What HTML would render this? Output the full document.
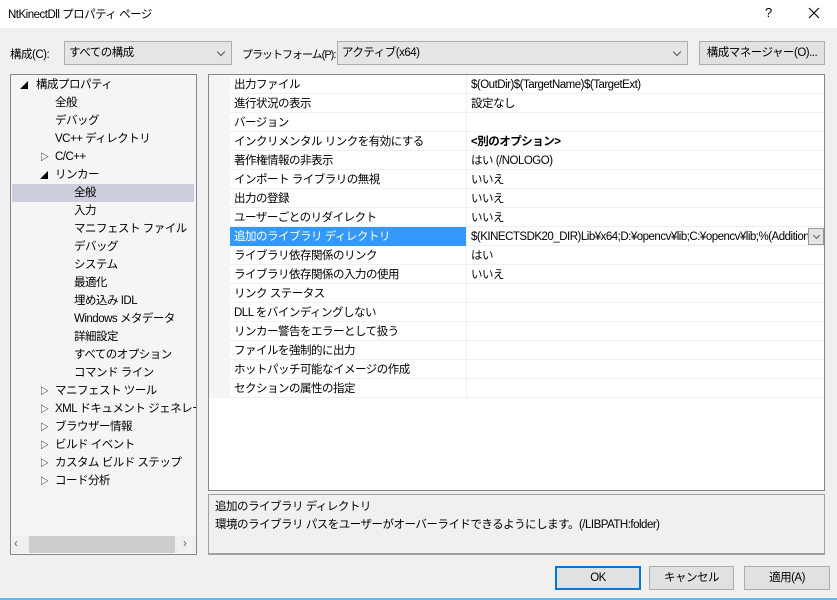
<!DOCTYPE html>
<html><head><meta charset="utf-8"><style>
*{margin:0;padding:0;box-sizing:border-box}
body{width:837px;height:600px;background:#f0f0f0;font-family:"Liberation Sans","Noto Sans CJK JP",sans-serif;font-size:11.5px;letter-spacing:-0.5px;color:#000;position:relative;overflow:hidden}
.a{position:absolute;white-space:nowrap}
.title{left:0;top:0;width:837px;height:28px;background:#fff}
.combo{background:#e5e5e5;border:1px solid #adadad;height:24px;line-height:22px;padding-left:4px}
.chev{position:absolute;right:7px;top:7px;width:6px;height:6px;border-right:1px solid #555;border-bottom:1px solid #555;transform:rotate(45deg)}
.btn{background:#e1e1e1;border:1px solid #adadad;height:24px;line-height:22px;text-align:center}
.tree{left:10px;top:74px;width:187px;height:481px;border:1px solid #828790;background:#f5f5f5}
.ti{position:absolute;height:18px;line-height:18px}
.grid{left:208px;top:74px;width:617px;height:417px;border:1px solid #828790;background:#fff}
.row{position:absolute;left:21px;width:594px;height:19px;line-height:18px;border-bottom:1px solid #f0f0f0}
.row .n{position:absolute;left:4px;top:1px}
.row .v{position:absolute;left:241px;top:1px}
.row .sep{position:absolute;left:236px;top:0;width:1px;height:19px;background:#f0f0f0}
</style></head><body>
<div class="a title"></div>
<div class="a" style="left:8px;top:6px">NtKinectDll プロパティ ページ</div>
<div class="a" style="left:765px;top:5px;font-size:13px">?</div>
<svg class="a" style="left:808px;top:7px" width="12" height="12"><path d="M1 1L11 11M11 1L1 11" stroke="#000" stroke-width="1.1"/></svg>

<div class="a" style="left:10px;top:46px">構成(C):</div>
<div class="a combo" style="left:64px;top:41px;width:168px">すべての構成<span class="chev"></span></div>
<div class="a" style="left:242px;top:46px;font-size:11px;letter-spacing:-1px">プラットフォーム(P):</div>
<div class="a combo" style="left:337px;top:41px;width:351px">アクティブ(x64)<span class="chev"></span></div>
<div class="a btn" style="left:699px;top:41px;width:126px">構成マネージャー(O)...</div>

<div class="a tree">
<div class="ti" style="left:1px;top:109px;width:182px;background:#cccedb"></div>
<div class="ti" style="left:9px;top:2px;font-size:8px">◢</div><div class="ti" style="left:25px;top:1px">構成プロパティ</div>
<div class="ti" style="left:44px;top:19px">全般</div>
<div class="ti" style="left:44px;top:37px">デバッグ</div>
<div class="ti" style="left:44px;top:55px">VC++ ディレクトリ</div>
<div class="ti" style="left:29px;top:73px;font-size:9px">▷</div><div class="ti" style="left:44px;top:73px">C/C++</div>
<div class="ti" style="left:29px;top:92px;font-size:8px">◢</div><div class="ti" style="left:44px;top:91px">リンカー</div>
<div class="ti" style="left:63px;top:109px">全般</div>
<div class="ti" style="left:63px;top:127px">入力</div>
<div class="ti" style="left:63px;top:145px">マニフェスト ファイル</div>
<div class="ti" style="left:63px;top:163px">デバッグ</div>
<div class="ti" style="left:63px;top:181px">システム</div>
<div class="ti" style="left:63px;top:199px">最適化</div>
<div class="ti" style="left:63px;top:217px">埋め込み IDL</div>
<div class="ti" style="left:63px;top:235px">Windows メタデータ</div>
<div class="ti" style="left:63px;top:253px">詳細設定</div>
<div class="ti" style="left:63px;top:271px">すべてのオプション</div>
<div class="ti" style="left:63px;top:289px">コマンド ライン</div>
<div class="ti" style="left:29px;top:307px;font-size:9px">▷</div><div class="ti" style="left:44px;top:307px">マニフェスト ツール</div>
<div class="ti" style="left:29px;top:325px;font-size:9px">▷</div><div class="ti" style="left:44px;top:325px;width:141px;overflow:hidden">XML ドキュメント ジェネレーター</div>
<div class="ti" style="left:29px;top:343px;font-size:9px">▷</div><div class="ti" style="left:44px;top:343px">ブラウザー情報</div>
<div class="ti" style="left:29px;top:361px;font-size:9px">▷</div><div class="ti" style="left:44px;top:361px">ビルド イベント</div>
<div class="ti" style="left:29px;top:379px;font-size:9px">▷</div><div class="ti" style="left:44px;top:379px">カスタム ビルド ステップ</div>
<div class="ti" style="left:29px;top:397px;font-size:9px">▷</div><div class="ti" style="left:44px;top:397px">コード分析</div>
<div class="ti" style="left:0;top:461px;width:185px;height:17px;background:#f0f0f0"></div>
<div class="ti" style="left:18px;top:461px;width:146px;height:17px;background:#cdcdcd"></div>
<div class="ti" style="left:3px;top:460px;color:#606060">‹</div>
<div class="ti" style="left:172px;top:460px;color:#606060">›</div>
</div>

<div class="a grid">
<div style="position:absolute;left:0;top:0;width:21px;height:323px;background:#f5f5f5"></div>
<div class="row" style="top:0"><span class="n">出力ファイル</span><span class="sep"></span><span class="v">$(OutDir)$(TargetName)$(TargetExt)</span></div>
<div class="row" style="top:19px"><span class="n">進行状況の表示</span><span class="sep"></span><span class="v">設定なし</span></div>
<div class="row" style="top:38px"><span class="n">バージョン</span><span class="sep"></span></div>
<div class="row" style="top:57px"><span class="n">インクリメンタル リンクを有効にする</span><span class="sep"></span><span class="v" style="font-weight:bold">&lt;別のオプション&gt;</span></div>
<div class="row" style="top:76px"><span class="n">著作権情報の非表示</span><span class="sep"></span><span class="v">はい (/NOLOGO)</span></div>
<div class="row" style="top:95px"><span class="n">インポート ライブラリの無視</span><span class="sep"></span><span class="v">いいえ</span></div>
<div class="row" style="top:114px"><span class="n">出力の登録</span><span class="sep"></span><span class="v">いいえ</span></div>
<div class="row" style="top:133px"><span class="n">ユーザーごとのリダイレクト</span><span class="sep"></span><span class="v">いいえ</span></div>
<div class="row" style="top:152px"><div style="position:absolute;left:0;top:0;width:236px;height:19px;background:#3399ff"></div><span class="n" style="color:#fff">追加のライブラリ ディレクトリ</span><span class="sep"></span><span class="v" style="width:337px;overflow:hidden">$(KINECTSDK20_DIR)Lib¥x64;D:¥opencv¥lib;C:¥opencv¥lib;%(AdditionalLibraryDirectories)</span><div style="position:absolute;left:578px;top:1px;width:16px;height:17px;background:#e5e5e5;border:1px solid #999"><span class="chev" style="right:4px;top:4px;width:5px;height:5px"></span></div></div>
<div class="row" style="top:171px"><span class="n">ライブラリ依存関係のリンク</span><span class="sep"></span><span class="v">はい</span></div>
<div class="row" style="top:190px"><span class="n">ライブラリ依存関係の入力の使用</span><span class="sep"></span><span class="v">いいえ</span></div>
<div class="row" style="top:209px"><span class="n">リンク ステータス</span><span class="sep"></span></div>
<div class="row" style="top:228px"><span class="n">DLL をバインディングしない</span><span class="sep"></span></div>
<div class="row" style="top:247px"><span class="n">リンカー警告をエラーとして扱う</span><span class="sep"></span></div>
<div class="row" style="top:266px"><span class="n">ファイルを強制的に出力</span><span class="sep"></span></div>
<div class="row" style="top:285px"><span class="n">ホットパッチ可能なイメージの作成</span><span class="sep"></span></div>
<div class="row" style="top:304px"><span class="n">セクションの属性の指定</span><span class="sep"></span></div>
</div>

<div class="a" style="left:208px;top:494px;width:617px;height:61px;border:1px solid #a0a0a0;border-bottom:2px solid #a0a0a0;background:#f0f0f0"></div>
<div class="a" style="left:215px;top:498px">追加のライブラリ ディレクトリ</div>
<div class="a" style="left:215px;top:516px">環境のライブラリ パスをユーザーがオーバーライドできるようにします。(/LIBPATH:folder)</div>

<div class="a btn" style="left:555px;top:566px;width:86px;border:2px solid #0078d7;line-height:20px">OK</div>
<div class="a btn" style="left:649px;top:566px;width:85px">キャンセル</div>
<div class="a btn" style="left:744px;top:566px;width:86px">適用(A)</div>
<div class="a" style="left:0;top:598px;width:837px;height:2px;background:#6ab4e0"></div>
</body></html>
